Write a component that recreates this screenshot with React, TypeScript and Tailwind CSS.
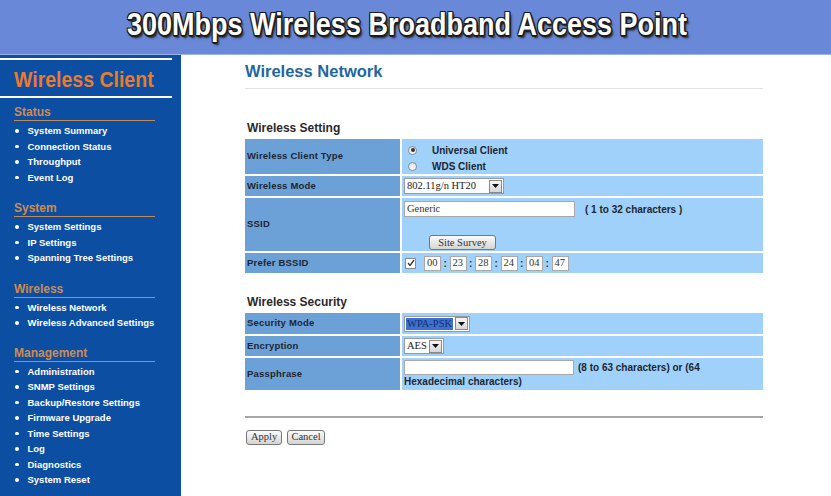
import React from "react";

const SANS = "font-['Liberation_Sans',Arial,sans-serif]";
const SERIF = "font-['Liberation_Serif','Times_New_Roman',serif]";

function Arrow() {
  return (
    <span className="flex h-[13px] w-[13px] shrink-0 items-center justify-center border border-[#8a8a8a] bg-gradient-to-b from-[#f6f6f6] to-[#d6d6d6]">
      <svg width="7" height="4" viewBox="0 0 7 4">
        <path d="M0 0 L7 0 L3.5 4 Z" fill="#111" />
      </svg>
    </span>
  );
}

function Select({ w, text, hl }: { w: number; text: string; hl?: boolean }) {
  return (
    <div
      className="flex h-[16px] items-center justify-between border border-[#9a9a9a] bg-white pl-[1px] pr-[1px]"
      style={{ width: w }}
    >
      <span
        className={`${SERIF} whitespace-nowrap text-[10.5px] leading-[12px] px-[1px] ${hl ? "bg-[#3d70cf] text-[#13306e]" : "text-[#222]"}`}
      >
        {text}
      </span>
      <Arrow />
    </div>
  );
}

function Btn({ children, w }: { children: React.ReactNode; w: number }) {
  return (
    <div
      className={`${SERIF} flex h-[15px] items-center justify-center rounded-[3px] border border-[#777] bg-gradient-to-b from-[#fbfbfb] to-[#d4d4d4] text-[10.5px] leading-[12px] text-[#333]`}
      style={{ width: w }}
    >
      {children}
    </div>
  );
}

function Radio({ on }: { on?: boolean }) {
  return (
    <span className="flex h-[9px] w-[9px] items-center justify-center rounded-full border border-[#8c8c8c] bg-gradient-to-b from-[#e3e3e3] to-[#ffffff]">
      {on && <span className="h-[4px] w-[4px] rounded-full bg-[#333]" />}
    </span>
  );
}

function Section({ title, items, className }: { title: string; items: string[]; className?: string }) {
  return (
    <div className={className}>
      <div className="ml-[14px] w-[141px] border-b border-[#c08a5a] text-[12px] font-bold leading-[15px] text-[#cf8b4f]">
        {title}
      </div>
      <ul className="mt-[2px]">
        {items.map((t) => (
          <li key={t} className="flex h-[15.5px] items-center text-[9.5px] font-bold leading-[15.5px] text-white">
            <span className="ml-[15px] mr-[9px] h-[3.5px] w-[3.5px] rounded-full bg-white" />
            {t}
          </li>
        ))}
      </ul>
    </div>
  );
}

function Row({ label, h, children, valueClass }: { label: string; h: number; children: React.ReactNode; valueClass?: string }) {
  return (
    <div className="flex gap-[2px]" style={{ height: h }}>
      <div className="flex w-[155px] items-center bg-[#6ca1d7] pl-[2px] text-[9.5px] font-bold tracking-[0.2px] text-[#1d2633]">
        {label}
      </div>
      <div className={`flex-1 bg-[#a0d1fa] pl-[2px] ${valueClass ?? "flex items-center"}`}>{children}</div>
    </div>
  );
}

function MacBox({ v }: { v: string }) {
  return (
    <span className={`${SERIF} flex h-[15px] w-[17px] items-center border border-[#a8a8a8] bg-white pl-[2px] text-[10.5px] leading-[12px] text-[#333]`}>
      {v}
    </span>
  );
}

export default function App() {
  const mac = ["00", "23", "28", "24", "04", "47"];
  return (
    <div className={`${SANS} h-[496px] w-[831px] overflow-hidden bg-white`}>
      <header className="flex h-[55px] items-center justify-center border-b border-[#9cb2e6] bg-[#6988d8] pb-[5px] pr-[17px]">
        <h1 className="scale-y-[1.15] text-[27px] font-bold leading-[30px] text-white [text-shadow:-1px_-1px_0_#1c1c1c,1px_-1px_0_#1c1c1c,-1px_1px_0_#1c1c1c,1px_1px_0_#1c1c1c,0_1.5px_0_#1c1c1c,1.5px_0_0_#1c1c1c,2px_2px_2px_#222]">
          300Mbps Wireless Broadband Access Point
        </h1>
      </header>
      <div className="flex">
        <aside className="h-[441px] w-[181px] bg-[#0c4ea2] pt-[3px]">
          <div className="h-[2px] w-[172px] bg-white" />
          <div className="h-[36px] pl-[14px] text-[19.5px] font-bold leading-[38px] text-[#ea7a30]">
            <span className="inline-block scale-y-[1.1]">Wireless Client</span>
          </div>
          <div className="h-[2px] w-[172px] bg-white" />
          <Section
            className="mt-[7px]"
            title="Status"
            items={["System Summary", "Connection Status", "Throughput", "Event Log"]}
          />
          <Section
            className="mt-[16px]"
            title="System"
            items={["System Settings", "IP Settings", "Spanning Tree Settings"]}
          />
          <Section
            className="mt-[16px]"
            title="Wireless"
            items={["Wireless Network", "Wireless Advanced Settings"]}
          />
          <Section
            className="mt-[15px]"
            title="Management"
            items={[
              "Administration",
              "SNMP Settings",
              "Backup/Restore Settings",
              "Firmware Upgrade",
              "Time Settings",
              "Log",
              "Diagnostics",
              "System Reset",
            ]}
          />
        </aside>
        <main className="ml-[64px] w-[518px] pt-[6px]">
          <div className="border-b border-[#e4e4e4] pb-[7px] text-[16.5px] font-bold leading-[20px] text-[#1f66a2]">
            Wireless Network
          </div>
          <div className="mt-[31px] pl-[2px] text-[12px] font-bold leading-[16px] text-[#2a2a2a]">Wireless Setting</div>
          <div className="mt-[3px] flex flex-col gap-[2px]">
            <Row label="Wireless Client Type" h={35} valueClass="flex flex-col pt-[3px]">
              <div className="flex h-[16px] items-center text-[10px] font-bold text-[#1d2633]">
                <span className="ml-[4px] mr-[15px]"><Radio on /></span>Universal Client
              </div>
              <div className="flex h-[16px] items-center text-[10px] font-bold text-[#1d2633]">
                <span className="ml-[4px] mr-[15px]"><Radio /></span>WDS Client
              </div>
            </Row>
            <Row label="Wireless Mode" h={20}>
              <Select w={100} text="802.11g/n HT20" />
            </Row>
            <Row label="SSID" h={53} valueClass="flex flex-col pt-[3px]">
              <div className="flex items-center">
                <span className={`${SERIF} flex h-[16px] w-[171px] items-center border border-[#a8a8a8] bg-white pl-[2px] text-[10.5px] text-[#333]`}>
                  Generic
                </span>
                <span className="ml-[10px] text-[10px] font-bold text-[#1d2633]">( 1 to 32 characters )</span>
              </div>
              <div className="ml-[25px] mt-[18px]">
                <Btn w={67}>Site Survey</Btn>
              </div>
            </Row>
            <Row label="Prefer BSSID" h={20}>
              <span className="ml-[1px] mr-[8px] flex h-[11px] w-[11px] items-center justify-center border border-[#8c8c8c] bg-white">
                <svg width="8" height="8" viewBox="0 0 8 8">
                  <path d="M1 4 L3 6.5 L7 1" fill="none" stroke="#333" strokeWidth="1.3" />
                </svg>
              </span>
              {mac.map((m, i) => (
                <React.Fragment key={i}>
                  {i > 0 && <span className="w-[8.5px] text-center text-[10px] font-bold text-[#333]">:</span>}
                  <MacBox v={m} />
                </React.Fragment>
              ))}
            </Row>
          </div>
          <div className="mt-[21px] pl-[2px] text-[12px] font-bold leading-[16px] text-[#2a2a2a]">Wireless Security</div>
          <div className="mt-[3px] flex flex-col gap-[2px]">
            <Row label="Security Mode" h={21}>
              <Select w={66} text="WPA-PSK" hl />
            </Row>
            <Row label="Encryption" h={20}>
              <Select w={40} text="AES" />
            </Row>
            <Row label="Passphrase" h={32} valueClass="flex flex-col pt-[2px]">
              <div className="flex items-center">
                <span className="h-[15px] w-[170px] border border-[#a8a8a8] bg-white" />
                <span className="ml-[4px] text-[10px] font-bold text-[#1d2633]">(8 to 63 characters) or (64</span>
              </div>
              <div className="text-[10px] font-bold leading-[14px] text-[#1d2633]">Hexadecimal characters)</div>
            </Row>
          </div>
          <div className="mt-[26px] h-[1.5px] bg-[#a6a6a6]" />
          <div className="mt-[12px] flex gap-[5px] pl-[1px]">
            <Btn w={36}>Apply</Btn>
            <Btn w={38}>Cancel</Btn>
          </div>
        </main>
      </div>
    </div>
  );
}
